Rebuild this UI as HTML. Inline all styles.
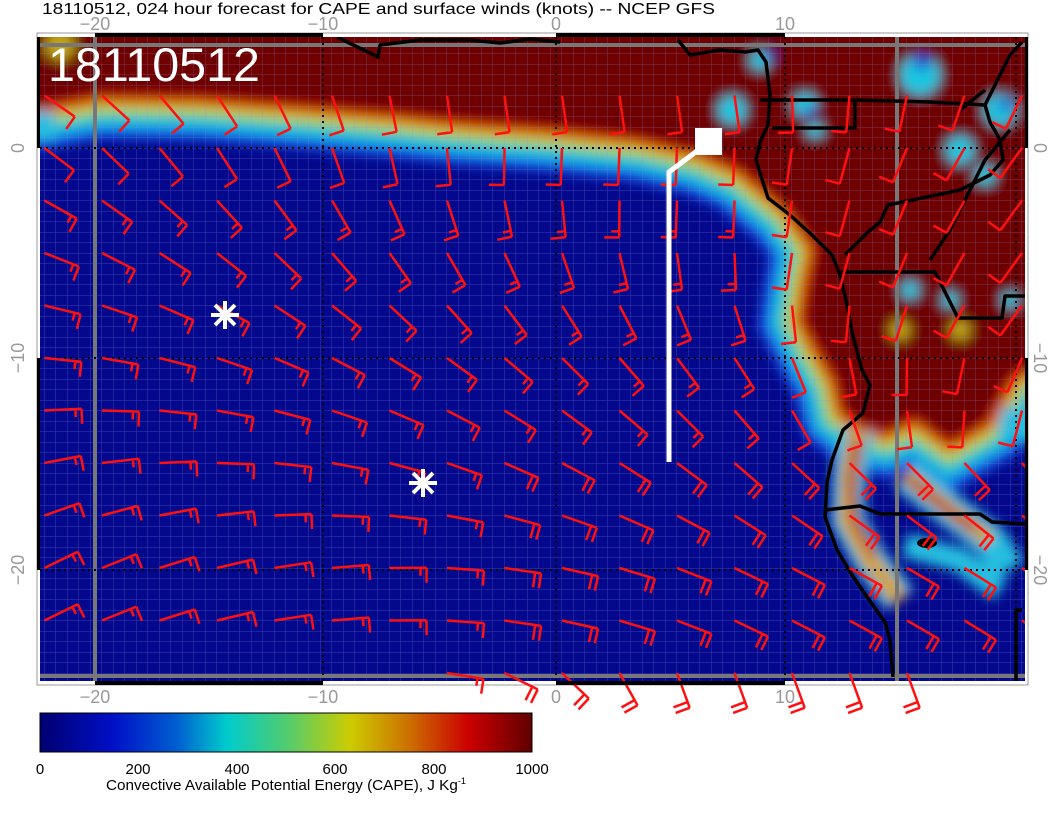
<!DOCTYPE html>
<html><head><meta charset="utf-8"><style>
html,body{margin:0;padding:0;background:#fff;}
body{width:1056px;height:816px;overflow:hidden;position:relative;font-family:"Liberation Sans",sans-serif;}
svg{position:absolute;left:0;top:0;}
</style></head><body>
<svg id="s" width="1056" height="816" viewBox="0 0 1056 816" xmlns="http://www.w3.org/2000/svg">
<defs>
<clipPath id="plot"><rect x="40" y="37" width="985" height="644"/></clipPath>
<filter id="bl" x="-10%" y="-10%" width="120%" height="120%"><feGaussianBlur stdDeviation="6"/></filter>
<pattern id="grid" width="11.5" height="10.5" patternUnits="userSpaceOnUse" x="44" y="43">
<path d="M0,0 V10.5 M0,0 H11.5" stroke="#8a8ee0" stroke-opacity="0.4" stroke-width="1" fill="none"/>
</pattern>
<linearGradient id="cb" x1="0" x2="1" y1="0" y2="0">
<stop offset="0" stop-color="#000070"/>
<stop offset="0.15" stop-color="#0010c8"/>
<stop offset="0.28" stop-color="#0060d0"/>
<stop offset="0.38" stop-color="#00cccc"/>
<stop offset="0.5" stop-color="#50cc70"/>
<stop offset="0.63" stop-color="#cccc00"/>
<stop offset="0.75" stop-color="#cc7000"/>
<stop offset="0.87" stop-color="#cc0000"/>
<stop offset="1" stop-color="#600000"/>
</linearGradient>
<path id="warm" d="M20,20 L1040,20 L1040,360 L1010,375 L985,420 L950,440 L915,415 L885,430 L860,422 L845,410 L838,380 L818,345 L805,320 L810,285 L818,248 L790,208 L742,168 L700,150 L640,136 L550,126 L450,118 L400,112 L300,103 L200,95 L100,93 L40,104 L20,104 Z"/>
</defs>
<text x="42" y="14" font-size="16" fill="#000" textLength="673" lengthAdjust="spacingAndGlyphs">18110512, 024 hour forecast for CAPE and surface winds (knots) -- NCEP GFS</text>
<g font-size="18" fill="#999" text-anchor="middle">
<text x="95" y="30">−20</text><text x="323" y="30">−10</text><text x="556" y="30">0</text><text x="785" y="30">10</text>
<text x="95" y="703">−20</text><text x="323" y="703">−10</text><text x="556" y="703">0</text><text x="785" y="703">10</text>
<text transform="translate(24,148) rotate(-90)">0</text>
<text transform="translate(24,358) rotate(-90)">−10</text>
<text transform="translate(24,570) rotate(-90)">−20</text>
<text transform="translate(1034,148) rotate(90)">0</text>
<text transform="translate(1034,358) rotate(90)">−10</text>
<text transform="translate(1034,570) rotate(90)">−20</text>
</g>
<rect x="37" y="33" width="991" height="652" fill="none" stroke="#999" stroke-width="1"/>
<g clip-path="url(#plot)">
<rect x="40" y="37" width="985" height="644" fill="#03088c"/>
<g filter="url(#bl)">
<use href="#warm" fill="none" stroke="#1848e0" stroke-width="92"/>
<use href="#warm" fill="none" stroke="#10b0e8" stroke-width="72"/>
<use href="#warm" fill="none" stroke="#30d0b0" stroke-width="54"/>
<use href="#warm" fill="none" stroke="#c8d020" stroke-width="38"/>
<use href="#warm" fill="none" stroke="#e07010" stroke-width="24"/>
<use href="#warm" fill="none" stroke="#c00a00" stroke-width="12"/>
<use href="#warm" fill="#6e0000"/>
<path d="M858,430 L850,470 L848,520 L870,560 L900,600" fill="none" stroke="#20c0e0" stroke-width="34"/>
<path d="M858,430 L850,470 L848,520 L870,560 L900,600" fill="none" stroke="#d8a020" stroke-width="18"/>
<path d="M858,440 L852,480 L855,520 L875,555" fill="none" stroke="#b01000" stroke-width="8"/>
<path d="M905,475 L950,510 L990,540 L1010,570" fill="none" stroke="#20c0e0" stroke-width="34"/>
<path d="M905,475 L950,510 L990,540" fill="none" stroke="#d0a020" stroke-width="16"/>
<path d="M910,480 L950,512 L975,530" fill="none" stroke="#c01000" stroke-width="8"/>
<path d="M1000,420 L1040,430" fill="none" stroke="#20c0e0" stroke-width="30"/>
<path d="M905,545 L960,560 L1000,590" fill="none" stroke="#20c0e0" stroke-width="24"/>
<path d="M40,112 L40,140" stroke="#20c0e0" stroke-width="30"/>
<g fill="#18c8e0">
<circle cx="760" cy="60" r="10"/><circle cx="805" cy="105" r="12"/><circle cx="815" cy="130" r="8"/><circle cx="732" cy="110" r="14"/>
<circle cx="920" cy="75" r="20"/><circle cx="1000" cy="110" r="16"/><circle cx="960" cy="150" r="14"/><circle cx="985" cy="175" r="10"/>
<circle cx="910" cy="290" r="9"/><circle cx="950" cy="300" r="8"/><circle cx="1010" cy="300" r="8"/>
</g>
<g fill="#1a2ad0"><circle cx="922" cy="62" r="8"/><circle cx="770" cy="55" r="5"/><circle cx="810" cy="112" r="5"/><circle cx="1005" cy="105" r="6"/></g>
<g fill="#d8d020" opacity="0.8"><circle cx="900" cy="330" r="10"/><circle cx="960" cy="330" r="10"/><circle cx="60" cy="45" r="15"/></g>
</g>
<rect x="40" y="37" width="985" height="644" fill="url(#grid)"/>
<g stroke="#777" stroke-width="4" fill="none">
<path d="M40,45 H1025"/><path d="M40,676 H1025"/><path d="M95,37 V681"/><path d="M897,37 V681"/>
</g>
<g stroke="#000" stroke-width="2" stroke-dasharray="2,4" fill="none">
<path d="M40,148 H1025"/><path d="M40,358 H1025"/><path d="M40,570 H1025"/>
<path d="M323,37 V681"/><path d="M556,37 V681"/><path d="M785,37 V681"/><path d="M1016,37 V681"/>
</g>
<g stroke="#000" stroke-width="3.5" fill="none" stroke-linejoin="round">
<path d="M337,37 L378,57 L380,45 L420,40 L470,40 L500,43 L530,39 L560,42"/>
<path d="M678,40 L690,55 L720,50 L745,52 L758,50 L766,62 L770,95 L768,125 L760,142 L756,160 L768,198 L790,215 L812,235 L832,255 L840,275 L846,300 L852,332 L862,370 L870,385 L863,413 L843,430 L832,460 L827,482 L825,517 L837,550 L852,575 L867,597 L885,622 L890,640 L893,677"/>
<path d="M760,100 L855,100 L855,128 L772,128"/>
<path d="M855,100 L930,102 L985,105 L990,122 L1000,140 L1003,160 L990,175 L960,190 L922,198 L888,205 L880,222 L868,232 L845,255"/>
<path d="M840,272 L935,272 L958,318 L1002,318 L1005,296 L1025,296"/>
<path d="M825,510 L860,506 L880,514 L980,514 L992,522 L1025,524"/>
<path d="M985,105 L1010,55 L1022,42"/>
<path d="M1010,130 L985,160 L975,180 L950,230 L930,260"/>
<path d="M960,110 L985,90"/>
<path d="M1022,610 L1016,610 L1016,681"/>
</g>
<ellipse cx="927" cy="543" rx="10" ry="5" fill="#000"/>
<g id="barbs" stroke="#ff1010" stroke-width="2.5" fill="none"></g>
</g>
<g id="barbs2" stroke="#ff1010" stroke-width="2.5" fill="none"></g>
<g fill="#000">
<rect x="95" y="33" width="228" height="4"/><rect x="556" y="33" width="229" height="4"/>
<rect x="95" y="681" width="228" height="4"/><rect x="556" y="681" width="229" height="4"/>
<rect x="37" y="37" width="3" height="111"/><rect x="37" y="358" width="3" height="212"/>
<rect x="1025" y="37" width="3" height="111"/><rect x="1025" y="358" width="3" height="212"/>
</g>
<path d="M669,462 V172 L697,151" stroke="#fff" stroke-width="5" fill="none"/>
<rect x="695" y="128" width="27" height="27" fill="#fff"/>
<g stroke="#fff" stroke-width="4">
<path d="M211,315 H239 M225,301 V329 M215,305 L235,325 M235,305 L215,325"/>
<path d="M409,483 H437 M423,469 V497 M413,473 L433,493 M433,473 L413,493"/>
</g>
<text x="48" y="81" font-size="47" fill="#fff" textLength="212" lengthAdjust="spacingAndGlyphs">18110512</text>
<rect x="40" y="713" width="492" height="39" fill="url(#cb)" stroke="#000" stroke-width="1"/>
<g font-size="15" fill="#000" text-anchor="middle">
<text x="40" y="774">0</text><text x="138" y="774">200</text><text x="237" y="774">400</text><text x="335" y="774">600</text><text x="434" y="774">800</text><text x="532" y="774">1000</text>
<text x="286" y="790" textLength="360" lengthAdjust="spacingAndGlyphs">Convective Available Potential Energy (CAPE), J Kg<tspan font-size="9" dy="-6">-1</tspan></text>
</g>
</svg>
<script>
(function(){
var g=document.getElementById('barbs'),g2=document.getElementById('barbs2'),ns='http://www.w3.org/2000/svg';
function seg(p,x1,y1,x2,y2){p.push('M'+x1.toFixed(1)+','+y1.toFixed(1)+'L'+x2.toFixed(1)+','+y2.toFixed(1));}
var d1=[],d2=[];
for(var j=0;j<12;j++){var y=95.5+52.5*j;
 for(var i=0;i<18;i++){var x=44.5+57.5*i;
  var out=y>670;
  if(out&&(x<440||x>960)) continue;
  var c=10-(y-358)*0.16; if(c<-22)c=-22;
  var s=0.075+(y<358?(358-y)*0.0002:0);
  var a=c+s*(x-100); if(a>92)a=92; if(x>740&&y<420) a=a+(x-740)*0.12; if(x>740&&y>=420) a=a-(x-740)*0.05;
  if(y<110) a=a-10;
  if(out){a=10+(x-450)*0.3; if(a>70)a=70;}
  var r=a*Math.PI/180, dx=Math.cos(r), dy=Math.sin(r), L=37, bx=-dy, by=dx;
  var full=1, half=(y>200&&x<760)?1:0;
  if(x>480&&y>440){full=2;half=0;}
  if(y>600&&x<480){full=1;half=1;}
  var p=out?d2:d1;
  var ex=x+dx*L, ey=y+dy*L;
  seg(p,x,y,ex,ey);
  for(var k=0;k<full;k++){var px=ex-dx*6*k, py=ey-dy*6*k; seg(p,px,py,px+bx*15,py+by*15);}
  if(half){var k2=full; var px=ex-dx*6*k2, py=ey-dy*6*k2; seg(p,px,py,px+bx*8,py+by*8);}
 }
}
var e=document.createElementNS(ns,'path');e.setAttribute('d',d1.join(''));g.appendChild(e);
var e2=document.createElementNS(ns,'path');e2.setAttribute('d',d2.join(''));g2.appendChild(e2);
})();
</script>
</body></html>
